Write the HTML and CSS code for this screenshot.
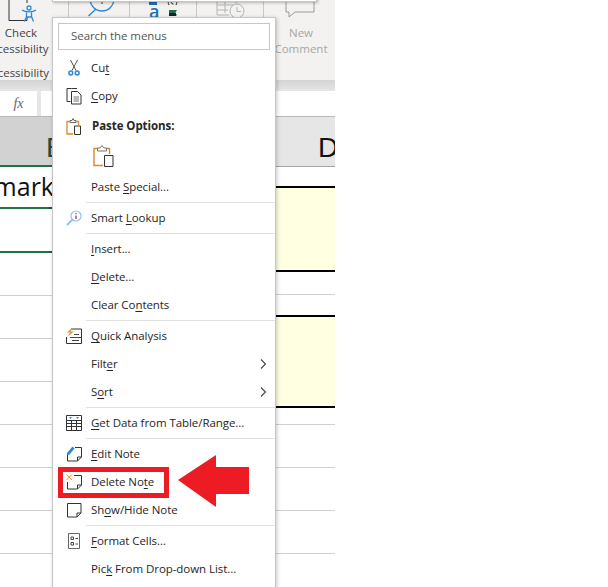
FILE: index.html
```html
<!DOCTYPE html>
<html lang="en">
<head>
<meta charset="utf-8">
<title>Delete Note</title>
<link rel="stylesheet" href="styles.css">
</head>
<body>
<div class="stage">
  <div class="sheet">
    <div class="ribbon">
      <div class="group g-check">
        <svg class="ico-check" width="30" height="24" viewBox="0 0 30 24"><path d="M1 0V20.500H19M19 20.500V17M19 0V3" fill="none" stroke="#333" stroke-width="1"/><g fill="none" stroke="#2b88d8" stroke-width="1.300"><circle cx="21" cy="8" r="2"/><path d="M14 10C17 12.500 25 12.500 28 10M18.500 12.500V16.500L16.500 21.500M23.500 12.500V16.500L25.500 21.500M18.500 17H23.500"/></g></svg>
        <span class="r-label r-first">Check</span>
        <span class="r-label">Accessibility ▾</span>
        <span class="r-label r-group-name">Accessibility</span>
      </div>
      <div class="group g-look">
        <svg width="28" height="18" viewBox="0 0 28 18"><g fill="none" stroke="#2b88d8" stroke-width="1.400"><circle cx="14" cy="-1" r="12"/><path d="M8 9L.5 16"/></g><path d="M14 0V4" stroke="#444"/></svg>
      </div>
      <div class="group g-trans">
        <div class="tr-col"><div class="tr-bar"></div><span class="tr-a">a</span></div>
        <svg width="14" height="17" viewBox="0 0 14 17"><path d="M4 0C3 2 3 3 4 5M8 0A2 2 0 1 0 8.500 4M11 0C12 2 12 3 11 5" fill="none" stroke="#222"/><path d="M4 10H12L10.500 12.500L12 15.500H4Z" fill="#1e6e42"/><path d="M4 13H11V16H4Z" fill="#123"/></svg>
      </div>
      <div class="group g-hist">
        <svg width="32" height="18" viewBox="0 0 32 18"><g fill="none" stroke="#b4b4b4"><path d="M1 0V15H13M1 5H17M1 10H12M9 0V13M20 0V3"/><circle cx="21" cy="11" r="7"/><path d="M21 7V11.500H25"/></g></svg>
      </div>
      <div class="group g-new">
        <svg width="32" height="18" viewBox="0 0 32 18"><path d="M1 0V12H4V17L10 12H29V0" fill="none" stroke="#9a9a9a"/></svg>
        <span class="r-label r-muted r-first-new">New</span>
        <span class="r-label r-muted">Comment</span>
      </div>
    </div>
    <div class="ribbon-shade"></div>
    <div class="formula">
      <div class="fx">fx</div>
      <div class="f-input"></div>
    </div>
    <div class="grid">
      <div class="col col-e">
        <div class="head head-e"><span class="head-letter">E</span></div>
        <div class="cell c-title"><span class="title">Remark</span></div>
        <div class="cell c-sel"></div>
        <div class="cell c-43"></div>
        <div class="cell c-43"></div>
        <div class="cell c-43"></div>
        <div class="cell c-43"></div>
        <div class="cell c-43"></div>
        <div class="cell c-43"></div>
        <div class="cell c-43"></div>
      </div>
      <div class="col col-mid">
        <div class="head"></div>
      </div>
      <div class="col col-d">
        <div class="head head-d"><span class="head-letter">D</span></div>
        <div class="d-gap-1"></div>
        <div class="note note-1"></div>
        <div class="d-line d-line-1"></div>
        <div class="note note-2"></div>
        <div class="d-line d-line-2"></div>
        <div class="cell c-43"></div>
        <div class="cell c-43"></div>
        <div class="cell c-43"></div>
      </div>
    </div>
    <div class="mini-bar"></div>
    <div class="menu">
      <div class="search">Search the menus</div>
      <div class="item item-first">
        <svg class="ico" width="16" height="16" viewBox="0 0 16 16"><path d="M4.500 0L10 10.500M11.500 0L6 10.500" fill="none" stroke="#555" stroke-width="1"/><g fill="none" stroke="#2b88d8" stroke-width="1.500"><circle cx="4.800" cy="13" r="1.900"/><circle cx="11.200" cy="13" r="1.900"/></g></svg>
        <span>Cu<u>t</u></span>
      </div>
      <div class="item">
        <svg class="ico" width="16" height="18" viewBox="0 0 16 18"><g fill="none" stroke="#333"><path d="M5.500 1.500H1V14.500H4.500M5.500 1.500H11"/><path d="M5.500 4.500H11.500L15 8V17H5.500Z"/><path d="M7.500 10H13M7.500 12H13M7.500 14H13" stroke="#777"/></g></svg>
        <span><u>C</u>opy</span>
      </div>
      <div class="item item-head">
        <svg class="ico ico-paste" width="16" height="17" viewBox="0 0 16 17"><path d="M3.500 3.500H1V16H7" fill="none" stroke="#d98a2b" stroke-width="1.300"/><path d="M10.500 3.500H12.500V7" fill="none" stroke="#d98a2b" stroke-width="1.300"/><path d="M4 4.500V2.500H6L7 .5L8 2.500H10V4.500Z" fill="#fff" stroke="#666"/><path d="M8.500 8H14.500V16.500H8.500Z" fill="#fff" stroke="#333"/></svg>
        <strong>Paste Options:</strong>
      </div>
      <div class="paste-row">
        <svg width="21" height="22" viewBox="0 0 21 22"><path d="M5 3.500H1V20.500H10" fill="none" stroke="#d98a2b" stroke-width="1.400"/><path d="M13 3.500H16.500V9" fill="none" stroke="#d98a2b" stroke-width="1.400"/><path d="M4.500 6V3H7L9 .5L11 3H13.500V6Z" fill="#fff" stroke="#777"/><path d="M11.500 10.500H20V21.500H11.500Z" fill="#fff" stroke="#333"/></svg>
      </div>
      <div class="item"><span class="no-ico">Paste <u>S</u>pecial...</span></div>
      <div class="sep"></div>
      <div class="item">
        <svg class="ico" width="16" height="16" viewBox="0 0 16 16"><g fill="none" stroke="#8ec4ea"><circle cx="10" cy="6" r="5" stroke-width="1.200"/><path d="M6.500 9.500L1 15" stroke-width="1.800"/></g><path d="M10 3V4.300M10 5.500V9" stroke="#8a2b6d" stroke-width="1.200"/></svg>
        <span>Smart <u>L</u>ookup</span>
      </div>
      <div class="sep"></div>
      <div class="item"><span class="no-ico"><u>I</u>nsert...</span></div>
      <div class="item"><span class="no-ico"><u>D</u>elete...</span></div>
      <div class="item"><span class="no-ico">Clear Co<u>n</u>tents</span></div>
      <div class="sep"></div>
      <div class="item">
        <svg class="ico" width="16" height="16" viewBox="0 0 16 16"><path d="M5 1H15.500V15.500H.5V9" fill="none" stroke="#333"/><path d="M4 9.500H15.500M6 12.500H13M8 6.500H13" fill="none" stroke="#444"/><path d="M6 0L1 4.500H4L1.500 8.500L8 3.500H4.800Z" fill="#e8912d"/></svg>
        <span><u>Q</u>uick Analysis</span>
      </div>
      <div class="item">
        <span class="no-ico">Filt<u>e</u>r</span>
        <svg class="chev" width="7" height="10" viewBox="0 0 7 10"><path d="M1 .5L5.500 5L1 9.500" fill="none" stroke="#444" stroke-width="1.100"/></svg>
      </div>
      <div class="item">
        <span class="no-ico">S<u>o</u>rt</span>
        <svg class="chev" width="7" height="10" viewBox="0 0 7 10"><path d="M1 .5L5.500 5L1 9.500" fill="none" stroke="#444" stroke-width="1.100"/></svg>
      </div>
      <div class="sep"></div>
      <div class="item">
        <svg class="ico" width="16" height="16" viewBox="0 0 16 16"><path d="M.5 .5H15.500V15.500H.5ZM.5 5.500H15.500M.5 8.500H15.500M.5 11.500H15.500M5.500 5.500V15.500M10.500 5.500V15.500" fill="none" stroke="#333"/><path d="M3 2H6L4.500 4ZM10 2H13L11.500 4Z" fill="#2b88d8"/></svg>
        <span><u>G</u>et Data from Table/Range...</span>
      </div>
      <div class="sep"></div>
      <div class="item">
        <svg class="ico" width="16" height="16" viewBox="0 0 16 16"><path d="M9 1.500H15.500V11L11.500 15H1.500V9M15.500 11H11.500V15" fill="none" stroke="#333"/><path d="M1 9L1 7L6.500 .5L8.500 2.500L3 9Z" fill="#2b88d8"/></svg>
        <span><u>E</u>dit Note</span>
      </div>
      <div class="item">
        <svg class="ico" width="16" height="16" viewBox="0 0 16 16"><path d="M8 1.500H15.500V11L11.500 15H1.500V8M15.500 11H11.500V15" fill="none" stroke="#333"/><path d="M.5 .5L6 6M6 .5L.5 6" fill="none" stroke="#e08a3c"/></svg>
        <span>Delete No<u>t</u>e</span>
      </div>
      <div class="item">
        <svg class="ico" width="16" height="16" viewBox="0 0 16 16"><path d="M1.500 1.500H15V11L11 15H1.500ZM15 11H11V15" fill="none" stroke="#333"/></svg>
        <span>Sh<u>o</u>w/Hide Note</span>
      </div>
      <div class="sep"></div>
      <div class="item">
        <svg class="ico" width="16" height="16" viewBox="0 0 16 16"><path d="M2.500 .5H13.500V15.500H2.500Z" fill="none" stroke="#666"/><path d="M5 4H7.500V6.500H5ZM5 9.500H7.500V12H5Z" fill="none" stroke="#444"/><path d="M9.500 5.500H12M9.500 11H12" stroke="#444"/></svg>
        <span><u>F</u>ormat Cells...</span>
      </div>
      <div class="item"><span class="no-ico">Pic<u>k</u> From Drop-down List...</span></div>
    </div>
    <div class="highlight"></div>
    <svg class="arrow" width="72" height="53" viewBox="0 0 72 53"><path d="M0 25L38 0V12H71V39H38V52Z" fill="#ed1c24"/></svg>
  </div>
</div>
</body>
</html>
```

FILE: styles.css
```css
* { box-sizing: border-box; }
html, body { margin: 0; padding: 0; background: #fff; }
body { width: 608px; height: 587px; overflow: hidden; font-family: "Open Sans", "Noto Sans", sans-serif; }
.stage { width: 608px; height: 587px; background: #fff; }
.sheet { position: relative; width: 335px; height: 587px; overflow: hidden; background: #fff; }

.ribbon { display: flex; height: 80px; background: #f3f2f1; overflow: hidden; font-size: 11.500px; color: #444; }
.group { height: 72px; flex: none; border-right: 1px solid #c8c6c4; display: flex; flex-direction: column; align-items: center; }
.g-check { width: 69px; padding-right: 26px; }
.ico-check { flex: none; margin-left: 4px; }
.r-label { white-space: nowrap; line-height: 16px; flex: none; }
.r-first { margin-top: 1px; }
.r-group-name { margin: 8px 8px 0 0; }
.g-look { width: 61px; align-items: flex-start; padding-left: 19px; }
.g-trans { width: 67px; flex-direction: row; align-items: flex-start; padding-left: 19px; }
.tr-col { width: 16px; display: flex; flex-direction: column; }
.tr-bar { width: 8px; height: 3px; margin-top: 2px; background: #1f6fb5; }
.tr-a { font-size: 18px; line-height: 13px; font-weight: 600; color: #1f6fb5; }
.g-hist { width: 67px; align-items: flex-start; padding-left: 19px; }
.g-new { width: 70px; border-right: 0; align-items: center; padding-left: 4px; }
.r-muted { color: #a6a6a6; }
.r-first-new { margin-top: 7px; }

.ribbon-shade { height: 11px; background: linear-gradient(#d4d4d4, #e6e6e6); }
.formula { display: flex; gap: 4px; height: 26px; background: #e6e6e6; border-bottom: 1px solid #b8b8b8; padding-bottom: 0; }
.fx { width: 37px; background: #fff; font-family: "Liberation Serif", serif; font-style: italic; font-size: 14px; color: #666; text-align: center; line-height: 25px; }
.f-input { flex: 1; background: #fff; }

.grid { display: flex; }
.col { flex: none; }
.col-e { width: 60px; overflow: hidden; }
.col-mid { flex: 1; }
.col-d { width: 60px; overflow: hidden; }
.head { height: 50px; background: #e6e6e6; border-bottom: 1px solid #a6a6a6; overflow: hidden; }
.head-e { background: #d2d2d2; border-bottom: 2px solid #217346; }
.head-letter { font-family: "Liberation Sans", sans-serif; font-size: 28px; line-height: 62px; color: #111; display: block; white-space: nowrap; }
.head-e .head-letter { padding-left: 46px; color: #1f4e3a; }
.head-d .head-letter { padding-left: 43px; }
.cell { border-bottom: 1px solid #d0d0d0; }
.c-title, .c-sel { border-bottom: 2px solid; border-image: linear-gradient(to right, #217346 48px, #444 48px) 1; }
.c-title { height: 42px; display: flex; justify-content: flex-end; padding-right: 6px; }
.title { flex: none; font-family: "Open Sans", sans-serif; font-size: 25px; line-height: 38px; color: #111; white-space: nowrap; }
.c-sel { height: 44px; }
.c-43 { height: 43px; }

.d-gap-1 { height: 19px; }
.note { background: #ffffe1; border-top: 2.500px solid #000; border-bottom: 2.500px solid #000; }
.note-1 { height: 86px; }
.note-2 { height: 93px; }
.d-line { border-bottom: 1px solid #d0d0d0; }
.d-line-1 { height: 23px; margin-bottom: 20px; }
.d-line-2 { height: 17px; }

.mini-bar { position: absolute; left: 52px; top: -4px; width: 265px; height: 6px; background: #fff; border: 1px solid #c6c6c6; box-shadow: 1px 1px 3px rgba(0,0,0,.25); }

.menu { position: absolute; left: 52px; top: 17px; width: 224px; height: 580px; background: #fff; border: 1px solid #c6c6c6; box-shadow: 1px 1px 4px rgba(0,0,0,.22); font-size: 11.500px; letter-spacing: -.06px; color: #262626; display: flex; flex-direction: column; }
.search { flex: none; margin: 5px 5px 0 5px; height: 27px; border: 1px solid #c6c6c6; padding-left: 12px; line-height: 24px; color: #555; font-size: 11.500px; }
.item { flex: none; height: 28px; display: flex; align-items: center; }
.item > span, .item > strong { margin-bottom: 2px; }
.item-first { margin-top: 4px; }
.item-head { margin-top: 2px; }
.ico { flex: none; margin: 0 9px 0 13px; }
.no-ico { margin-left: 38px; }
.paste-row { flex: none; height: 33px; padding: 5px 0 0 40px; display: flex; }
.chev { margin-left: auto; margin-right: 8px; }
.sep { flex: none; height: 3px; margin-left: 33px; background: linear-gradient(#e1e1e1, #e1e1e1) no-repeat 0 1px / 100% 1px; }
u { text-underline-offset: 2px; text-decoration-thickness: 1px; }
strong { font-weight: 700; font-size: 11.500px; margin-left: 1px; }

.highlight { position: absolute; left: 58px; top: 467px; width: 111px; height: 31px; border: 5px solid #ed1c24; }
.arrow { position: absolute; left: 178px; top: 455px; }
```
